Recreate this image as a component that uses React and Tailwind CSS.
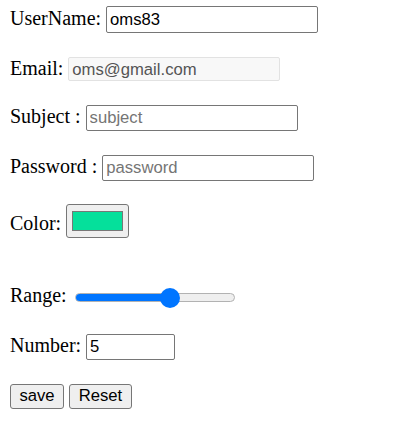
const label = "text-[20px] leading-none text-black [font-family:'Liberation_Serif',serif]"
const field =
  "w-[212px] border border-[#767676] rounded-[2px] px-[3px] text-[16.67px] text-black outline-none [font-family:'Liberation_Sans',Arial,sans-serif] placeholder:text-[#757575]"

export default function App() {
  return (
    <div className="w-[420px] h-[427px] bg-white pl-[10px] pt-[6px] flex flex-col">
      {/* UserName */}
      <div className="flex items-baseline gap-[5px] h-[27px]">
        <span className={label}>UserName:</span>
        <input className={`${field} h-[27px]`} defaultValue="oms83" />
      </div>

      {/* Email (disabled) */}
      <div className="flex items-baseline gap-[5px] h-[24px] mt-[24px]">
        <span className={label}>Email:</span>
        <input
          disabled
          className="w-[212px] h-[24px] border border-[#e2e2e2] bg-[#f8f8f8] rounded-[2px] px-[3px] text-[16.67px] text-[#545454] [font-family:'Liberation_Sans',Arial,sans-serif]"
          defaultValue="oms@gmail.com"
        />
      </div>

      {/* Subject */}
      <div className="flex items-baseline gap-[5px] h-[26px] mt-[24px]">
        <span className={label}>Subject :</span>
        <input className={`${field} h-[26px]`} placeholder="subject" />
      </div>

      {/* Password */}
      <div className="flex items-baseline gap-[5px] h-[26px] mt-[24px]">
        <span className={label}>Password :</span>
        <input type="password" className={`${field} h-[26px]`} placeholder="password" />
      </div>

      {/* Color */}
      <div className="flex items-start gap-[5px] h-[34px] mt-[23px]">
        <span className={`${label} mt-[9px]`}>Color:</span>
        <div className="w-[63px] h-[34px] bg-[#efefef] border border-[#767676] rounded-[3px] flex items-center justify-center">
          <div className="w-[51px] h-[20px] bg-[#05e09b] border border-[#777777]" />
        </div>
      </div>

      {/* Range */}
      <div className="flex items-baseline gap-[8px] h-[20px] mt-[47px]">
        <span className={label}>Range:</span>
        <div className="relative w-[160px] h-[20px] flex items-center">
          <div className="w-full h-[9px] rounded-full bg-[#efefef] border border-[#b2b2b2] overflow-hidden">
            <div className="w-[95px] h-full bg-[#0075ff]" />
          </div>
          <div className="absolute left-[85px] top-0 w-[20px] h-[20px] rounded-full bg-[#0075ff]" />
        </div>
      </div>

      {/* Number */}
      <div className="flex items-baseline gap-[5px] h-[26px] mt-[29px]">
        <span className={label}>Number:</span>
        <input className={`${field} !w-[89px] h-[26px]`} defaultValue="5" />
      </div>

      {/* Buttons */}
      <div className="flex gap-[5px] h-[25px] mt-[24px]">
        <button className="w-[54px] h-[25px] bg-[#efefef] border border-[#767676] rounded-[3px] text-[16.67px] text-black leading-none [font-family:'Liberation_Sans',Arial,sans-serif]">
          save
        </button>
        <button className="w-[63px] h-[25px] bg-[#efefef] border border-[#767676] rounded-[3px] text-[16.67px] text-black leading-none [font-family:'Liberation_Sans',Arial,sans-serif]">
          Reset
        </button>
      </div>
    </div>
  )
}
